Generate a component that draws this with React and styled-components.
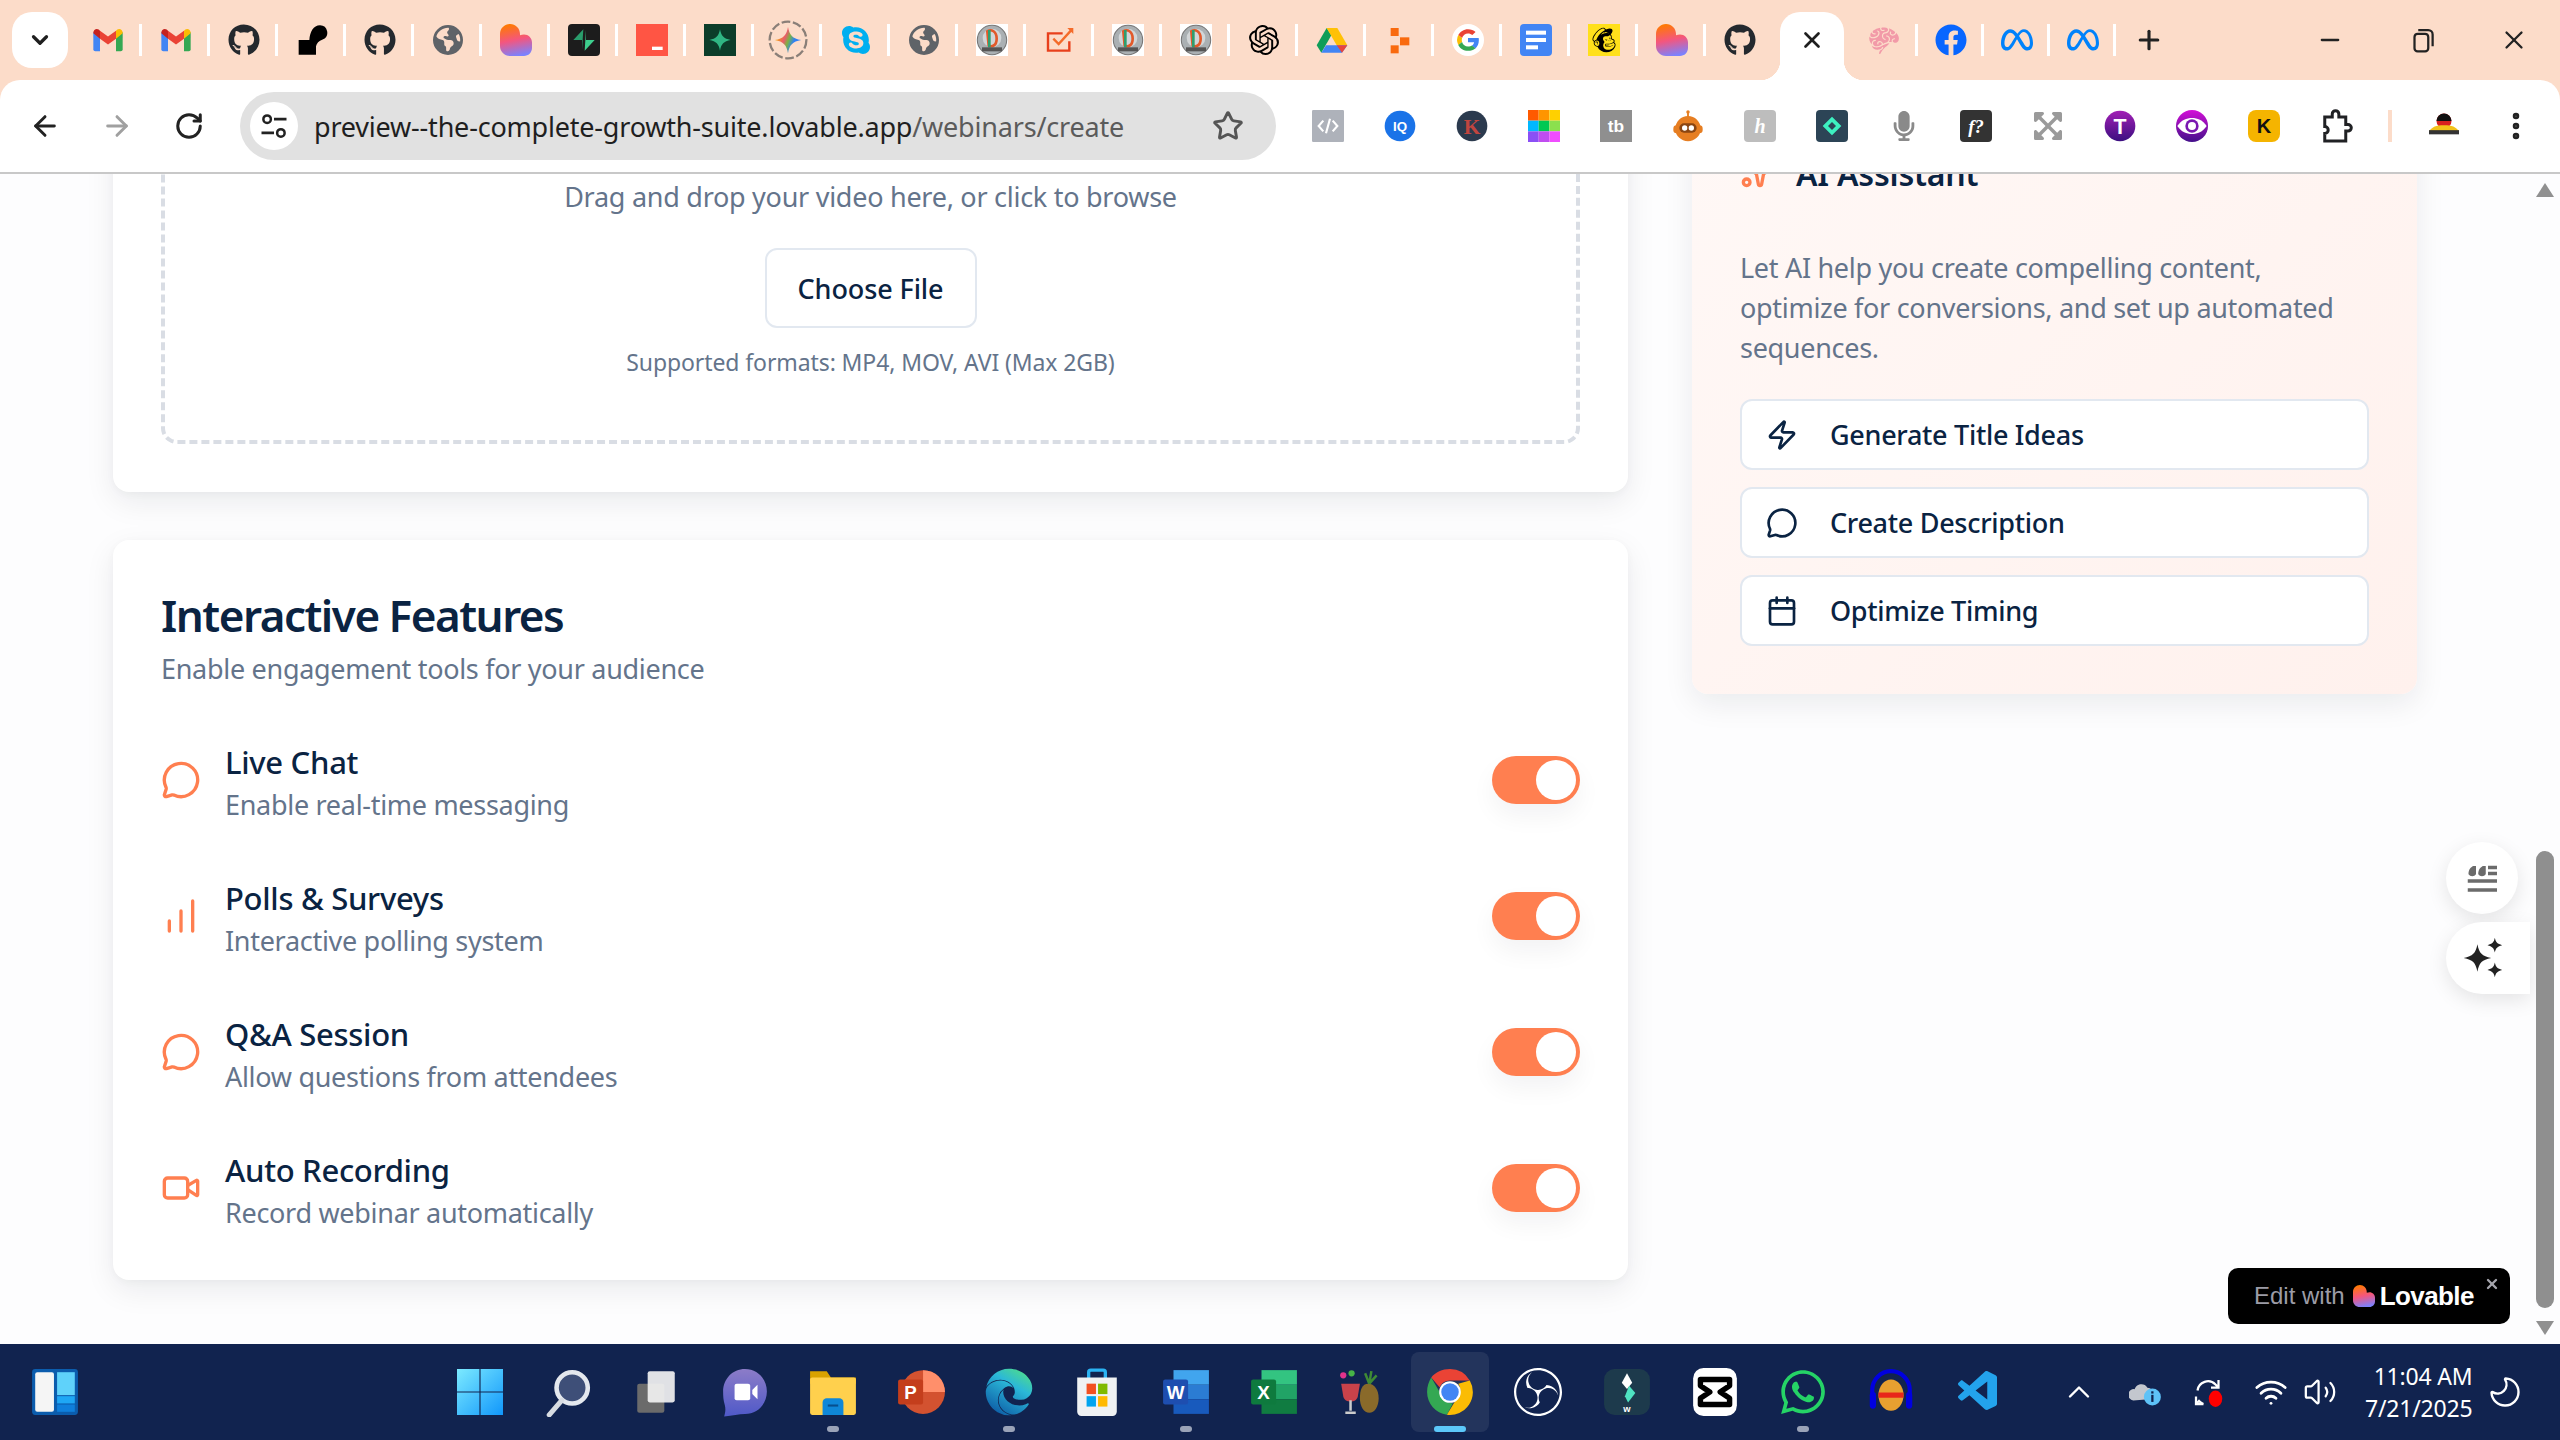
import React from "react"
import styled, { createGlobalStyle } from "styled-components"
import {
  ArrowLeft, ArrowRight, RotateCw, Star, X, Plus, Minus, ChevronDown, ChevronUp, MoreVertical,
  MessageCircle, ChartNoAxesColumnIncreasing, Video, Zap, Calendar, Sparkles, Wifi, Volume2, Moon,
} from "lucide-react"
import {
  FaGithub, FaSkype, FaFacebook, FaMailchimp, FaMicrophone, FaExpandArrowsAlt, FaWhatsapp, FaEdge,
} from "react-icons/fa"
import { FaEarthAmericas, FaMeta } from "react-icons/fa6"
import { SiOpenai, SiObsstudio } from "react-icons/si"
import { GiBrain } from "react-icons/gi"
import { VscVscode } from "react-icons/vsc"

const navy = "#0a2342"
const muted = "#64748b"
const coral = "#ff7f50"
const peach = "#fcdcc9"
const uiFont = `"Noto Sans", "Open Sans", sans-serif`

const GlobalStyle = createGlobalStyle`
  html, body { margin: 0; padding: 0; background: #fff; overflow: hidden; }
  * { box-sizing: border-box; }
`

const Glyph = ({ size = 32, children }) => (
  <svg width={size} height={size} viewBox="0 0 24 24" style={{ display: "block" }}>{children}</svg>
)

const LovableHeart = ({ size = 32 }) => (
  <Glyph size={size}>
    <defs>
      <linearGradient id="lovableGrad" x1="0.35" y1="0" x2="0.55" y2="1">
        <stop offset="0" stopColor="#ff7a00" />
        <stop offset="0.5" stopColor="#f4567e" />
        <stop offset="1" stopColor="#7a82ff" />
      </linearGradient>
    </defs>
    <path fill="url(#lovableGrad)" d="M7.500 0C11.700 0 15 3.300 15 7.500v1c1-.5 2-.7 3-.7 3.300 0 6 2.600 6 6V18c0 3.300-2.700 6-6 6H7.500C3.300 24 0 20.700 0 16.500v-9C0 3.300 3.300 0 7.500 0z" />
  </Glyph>
)

const Gmail = () => (
  <Glyph>
    <path fill="#4285f4" d="M1 6v13a1.500 1.500 0 0 0 1.500 1.500H6V10.500z" />
    <path fill="#34a853" d="M23 6v13a1.500 1.500 0 0 1-1.500 1.500H18V10.500z" />
    <path fill="#ea4335" d="M6 11l6 4.400 6-4.400V5l-6 4.400L6 5z" />
    <path fill="#c5221f" d="M1 6.500C1 4 3.600 3 5 4.200l1 .8v6L1 7z" />
    <path fill="#fbbc04" d="M23 6.500C23 4 20.400 3 19 4.200l-1 .8v6l5-4z" />
  </Glyph>
)
const GithubFav = () => <FaGithub size={32} color="#24292e" />
const BlobMark = () => <Glyph><path d="M2 12h8C10.500 6 13 1 18 1a5.500 5.500 0 0 1 2 10.600c-3 1-4.500 3-5 5V23H2z" /></Glyph>
const GlobeFav = () => <FaEarthAmericas size={30} color="#5f6368" />
const SupabaseFav = () => (
  <Glyph>
    <rect width="24" height="24" rx="3" fill="#1c1c1c" />
    <path fill="#3ecf8e" d="M13.500 4.500v7.500H20l-7.500 8z" />
    <path fill="#2a9d6c" d="M10.500 19.500V12H4l7.500-8z" />
  </Glyph>
)
const RedFav = () => (
  <Glyph><rect width="24" height="24" fill="#ff5544" /><rect x="12" y="17" width="8" height="2.500" fill="#fff" /></Glyph>
)
const GreenStarFav = () => (
  <Glyph>
    <rect width="24" height="24" fill="#0b3d2a" />
    <path fill="#2fb583" d="M12 4c.9 5 2.800 7 8 8-5.200 1-7.100 3-8 8-.9-5-2.800-7-8-8 5.200-1 7.100-3 8-8z" />
  </Glyph>
)
const GeminiFav = () => (
  <Glyph size={42}>
    <defs>
      <linearGradient id="geminiGrad" x1="0" y1="0.2" x2="1" y2="0.6">
        <stop offset="0.1" stopColor="#f9ab00" />
        <stop offset="0.4" stopColor="#ea5b6b" />
        <stop offset="0.55" stopColor="#7cb342" />
        <stop offset="0.75" stopColor="#2f80f5" />
      </linearGradient>
    </defs>
    <circle cx="12" cy="12" r="10.500" fill="none" stroke="#8a7f78" strokeWidth="1.300" strokeDasharray="5 1.500" />
    <path fill="url(#geminiGrad)" d="M12 4.500c.8 4.600 2.600 6.600 7.500 7.500-4.900.9-6.700 2.900-7.500 7.500-.8-4.600-2.600-6.600-7.500-7.500 4.900-.9 6.700-2.900 7.500-7.500z" />
  </Glyph>
)
const SkypeFav = () => <FaSkype size={32} color="#00aff0" />
const BadgeFav = () => (
  <Glyph>
    <rect width="24" height="24" fill="#fff" />
    <circle cx="12" cy="12" r="11" fill="#aab0b3" stroke="#777" strokeWidth="0.800" />
    <circle cx="12" cy="10.500" r="7" fill="#d2d6d8" />
    <path d="M8.500 5.500c3-2 7 0 7 5.500s-4 6.500-6 5z" fill="none" stroke="#e25a2b" strokeWidth="2" />
    <path d="M10 4.500v13" stroke="#2f9e6e" strokeWidth="2" />
    <rect x="4.500" y="17.500" width="15" height="3" fill="#555" />
  </Glyph>
)
const CheckFav = () => (
  <Glyph>
    <path d="M19 13v7H3V7h11" fill="none" stroke="#e8401c" strokeWidth="1.800" />
    <path d="M7 11l4 4 10-11" fill="none" stroke="#f46b2a" strokeWidth="1.800" />
    <path d="M17.500 3H22v4.500z" fill="#f46b2a" />
  </Glyph>
)
const OpenAiFav = () => <SiOpenai size={30} color="#000" />
const DriveFav = () => (
  <Glyph>
    <path fill="#0f9d58" d="M8 3l-7.500 13 3.500 5.500L11.500 8.500z" />
    <path fill="#ffc107" d="M8 3h8l7.500 13h-8z" />
    <path fill="#4285f4" d="M4 21.500h15.500l4-5.500H7.500z" />
    <path fill="#e8453c" d="M15.500 16h8l-4 5.500z" />
  </Glyph>
)
const OrangeBlocksFav = () => (
  <Glyph>
    <rect x="5" y="3" width="6" height="6" fill="#f96a0e" />
    <rect x="12" y="10" width="7" height="6" fill="#f96a0e" />
    <rect x="5" y="16" width="6" height="6" fill="#f96a0e" />
  </Glyph>
)
const GoogleFav = () => (
  <Glyph>
    <circle cx="12" cy="12" r="12" fill="#fff" />
    <g transform="translate(3.500 3.500) scale(0.708)">
      <path fill="#ea4335" d="M12 5c1.800 0 3.400.6 4.600 1.800l3.400-3.400C18 1.500 15.200.5 12 .5 7.500.5 3.600 3.100 1.700 6.800l4 3.100C6.600 7 9.100 5 12 5z" />
      <path fill="#4285f4" d="M23.500 12.300c0-.8-.1-1.600-.2-2.300H12v4.500h6.500c-.3 1.500-1.100 2.700-2.400 3.600l3.800 2.900c2.200-2.100 3.600-5.100 3.600-8.700z" />
      <path fill="#fbbc05" d="M5.700 14.100a7 7 0 0 1 0-4.200l-4-3.100a11.500 11.500 0 0 0 0 10.400z" />
      <path fill="#34a853" d="M12 23.500c3.100 0 5.700-1 7.900-2.800l-3.800-2.900c-1.100.7-2.400 1.200-4.100 1.200-2.900 0-5.400-2-6.300-4.900l-4 3.100c1.900 3.700 5.800 6.300 10.300 6.300z" />
    </g>
  </Glyph>
)
const DocsFav = () => (
  <Glyph>
    <rect width="24" height="24" rx="3" fill="#4285f4" />
    <rect x="4.500" y="5" width="15" height="3" fill="#fff" />
    <rect x="4.500" y="10.500" width="15" height="3" fill="#fff" />
    <rect x="4.500" y="16" width="9" height="3" fill="#fff" />
  </Glyph>
)
const MailchimpBox = styled.span`
  width: 32px;
  height: 32px;
  background: #ffe01b;
  display: flex;
  align-items: center;
  justify-content: center;
`
const MailchimpFav = () => (
  <MailchimpBox><FaMailchimp size={28} color="#000" /></MailchimpBox>
)
const BrainFav = () => <GiBrain size={32} color="#f29aa8" />
const FacebookFav = () => <FaFacebook size={32} color="#0866ff" />
const MetaFav = () => <FaMeta size={32} color="#0082fb" />

const TextBadge = ({ bg, color, label, round, fontSize = 13, family = "Liberation Sans", italic, radius = 3 }) => (
  <Glyph>
    {round
      ? <circle cx="12" cy="12" r="11.500" fill={bg} />
      : <rect width="24" height="24" rx={radius} fill={bg} />}
    <text x="12" y="12" dy="0.36em" textAnchor="middle" fill={color} fontSize={fontSize} fontWeight="700"
      fontFamily={family} fontStyle={italic ? "italic" : "normal"}>{label}</text>
  </Glyph>
)

const CodeExt = () => (
  <Glyph>
    <rect width="24" height="24" rx="1" fill="#aeb2ba" />
    <path d="M8.500 8L5 12l3.500 4M15.500 8l3.500 4-3.500 4M13.500 6.500l-3 11" fill="none" stroke="#fff" strokeWidth="1.600" />
  </Glyph>
)
const ColorGridExt = () => (
  <Glyph>
    {["#ff5a00", "#ff9500", "#ffd000", "#00b8ff", "#00c853", "#8be04e", "#8b50f5", "#c04df0", "#f04dff"].map((fill, i) => (
      <rect key={fill} x={(i % 3) * 8} y={Math.floor(i / 3) * 8} width="8" height="8" fill={fill} />
    ))}
  </Glyph>
)
const RobotExt = () => (
  <Glyph>
    <circle cx="12" cy="1.500" r="1.300" fill="#e67e22" />
    <rect x="11.300" y="1.500" width="1.400" height="4" fill="#e67e22" />
    <circle cx="12" cy="14" r="9.500" fill="#e67e22" />
    <rect x="1" y="11.500" width="22" height="6" rx="2.500" fill="#e67e22" />
    <rect x="5.500" y="10" width="13" height="7" rx="3.500" fill="#8a4511" />
    <circle cx="9.500" cy="13.500" r="2" fill="#fff" />
    <circle cx="14.500" cy="13.500" r="2" fill="#fff" />
  </Glyph>
)
const TealDiamondExt = () => (
  <Glyph>
    <rect width="24" height="24" rx="3" fill="#2c4456" />
    <path d="M12 5l7 7-7 7-7-7zM12 9l-3 3 3 3 3-3z" fill="#3df0c0" fillRule="evenodd" />
  </Glyph>
)
const EyeExt = () => (
  <Glyph>
    <defs>
      <linearGradient id="eyeGrad" x1="0" y1="0" x2="0" y2="1">
        <stop offset="0" stopColor="#d40fd8" />
        <stop offset="1" stopColor="#43108a" />
      </linearGradient>
    </defs>
    <circle cx="12" cy="12" r="12" fill="url(#eyeGrad)" />
    <path d="M1 12c3-4.500 7-6 11-6s8 1.500 11 6c-3 4.500-7 6-11 6s-8-1.500-11-6z" fill="#fff" />
    <circle cx="12" cy="12" r="5" fill="#7a17b0" />
    <circle cx="12" cy="12" r="3" fill="#fff" />
  </Glyph>
)
const TExt = () => (
  <Glyph>
    <defs>
      <linearGradient id="tGrad" x1="0" y1="0" x2="0" y2="1">
        <stop offset="0" stopColor="#a21fb5" />
        <stop offset="1" stopColor="#3b0f80" />
      </linearGradient>
    </defs>
    <circle cx="12" cy="12" r="11.500" fill="url(#tGrad)" />
    <text x="12" y="12" dy="0.36em" textAnchor="middle" fill="#fff" fontSize="16" fontWeight="700" fontFamily="Liberation Sans">T</text>
  </Glyph>
)
const PuzzleExt = () => (
  <Glyph size={36}>
    <path fill="none" stroke="#202124" strokeWidth="2" d="M4.500 6h5V4a2.200 2.200 0 0 1 4.400 0v2h4.600v5h1.500a2.200 2.200 0 0 1 0 4.400h-1.500V22H4.500v-5a2.300 2.300 0 0 0 0-4.600z" />
  </Glyph>
)
const AvatarExt = () => (
  <Glyph size={40}>
    <circle cx="12" cy="9" r="4.500" fill="#d81f1f" />
    <path d="M7.500 9a4.500 4.500 0 0 1 9 0z" fill="#111" />
    <path d="M3 15c2-2.500 4-3.500 9-3.500s7 1 9 3.500z" fill="#f2c21a" />
    <rect x="3" y="14.500" width="18" height="2.500" fill="#333" />
  </Glyph>
)

const tabs = [
  [Gmail], [Gmail], [GithubFav], [BlobMark], [GithubFav], [GlobeFav], [LovableHeart], [SupabaseFav], [RedFav],
  [GreenStarFav], [GeminiFav], [SkypeFav], [GlobeFav], [BadgeFav], [CheckFav], [BadgeFav], [BadgeFav], [OpenAiFav],
  [DriveFav], [OrangeBlocksFav], [GoogleFav], [DocsFav], [MailchimpFav], [LovableHeart], [GithubFav, true],
]

const extensions = [
  () => <CodeExt />,
  () => <TextBadge round bg="#1a73e8" color="#fff" label="IQ" fontSize={10} />,
  () => <TextBadge round bg="#2b3a4e" color="#c0453f" label="K" fontSize={16} family="Liberation Serif" />,
  () => <ColorGridExt />,
  () => <TextBadge bg="#8f8f8f" color="#fff" label="tb" fontSize={13} radius={0} />,
  () => <RobotExt />,
  () => <TextBadge bg="#bdbdbd" color="#fff" label="h" fontSize={15} family="Liberation Serif" italic />,
  () => <TealDiamondExt />,
  () => <FaMicrophone size={30} color="#8a8a8a" />,
  () => <TextBadge bg="#333" color="#fff" label="f?" fontSize={14} family="Liberation Serif" italic />,
  () => <FaExpandArrowsAlt size={32} color="#9a9a9a" />,
  () => <TExt />,
  () => <EyeExt />,
  () => <TextBadge bg="#f5b400" color="#111" label="K" fontSize={15} radius={6} />,
  () => <PuzzleExt />,
]

const features = [
  { icon: MessageCircle, title: "Live Chat", text: "Enable real-time messaging" },
  { icon: ChartNoAxesColumnIncreasing, title: "Polls & Surveys", text: "Interactive polling system" },
  { icon: MessageCircle, title: "Q&A Session", text: "Allow questions from attendees" },
  { icon: Video, title: "Auto Recording", text: "Record webinar automatically" },
]

const assistActions = [
  { icon: Zap, label: "Generate Title Ideas" },
  { icon: MessageCircle, label: "Create Description" },
  { icon: Calendar, label: "Optimize Timing" },
]

const WidgetsIcon = () => (
  <Glyph size={50}>
    <rect x="1" y="1" width="22" height="22" rx="1.500" fill="#0b5cad" />
    <rect x="2.500" y="2.500" width="9" height="19" rx="1" fill="#f5f5f5" />
    <rect x="13" y="2.500" width="8.500" height="11" fill="#5fd2fa" />
    <rect x="13" y="14" width="8.500" height="3.500" fill="#1ea7f5" />
    <rect x="13" y="18" width="8.500" height="3.500" fill="#0f7fdc" />
  </Glyph>
)
const StartIcon = () => (
  <Glyph size={46}>
    <defs>
      <linearGradient id="startGrad" x1="0" y1="0" x2="1" y2="1">
        <stop offset="0" stopColor="#7ceaff" />
        <stop offset="1" stopColor="#1197fb" />
      </linearGradient>
    </defs>
    <path fill="url(#startGrad)" d="M0 0h11.700v11.700H0zM12.300 0H24v11.700H12.300zM0 12.300h11.700V24H0zM12.300 12.300H24V24H12.300z" />
  </Glyph>
)
const SearchIcon = () => (
  <Glyph size={50}>
    <circle cx="14" cy="10" r="7.500" fill="#3e4f78" stroke="#e4e8ee" strokeWidth="2.200" />
    <path d="M9 16l-6 7" stroke="#d8dce2" strokeWidth="2.400" strokeLinecap="round" />
  </Glyph>
)
const TaskViewIcon = () => (
  <Glyph size={50}>
    <rect x="3" y="8" width="13" height="14" rx="1" fill="#6b6b6b" />
    <rect x="8" y="2" width="13" height="15" rx="1" fill="#f2f2f2" fillOpacity="0.92" />
  </Glyph>
)
const MeetIcon = () => (
  <Glyph size={50}>
    <defs>
      <linearGradient id="meetGrad" x1="0" y1="0" x2="0" y2="1">
        <stop offset="0" stopColor="#8c7cc8" />
        <stop offset="1" stopColor="#4f59c8" />
      </linearGradient>
    </defs>
    <path fill="url(#meetGrad)" d="M12 1c6 0 10.500 4.800 10.500 10.800S18 22.500 12 22.500c-3 0-6 .8-10 1.200 .6-2 .8-3.500 .3-5.500C1.600 16 1.500 14 1.500 11.800 1.500 5.800 6 1 12 1z" />
    <rect x="7" y="8" width="7.500" height="8" rx="1" fill="#fff" />
    <path d="M15.500 11l2.500-2.500v7L15.500 13z" fill="#fff" />
  </Glyph>
)
const FolderIcon = () => (
  <Glyph size={50}>
    <path d="M1 2h8l2 3h12v3H1z" fill="#d9a200" />
    <rect x="1" y="5" width="22" height="18" rx="1" fill="#ffd04d" />
    <path d="M7 23v-6a2 2 0 0 1 2-2h6a2 2 0 0 1 2 2v6z" fill="#0f87d8" />
    <rect x="9.500" y="18" width="5" height="1" fill="#074f8e" />
  </Glyph>
)
const PowerPointIcon = () => (
  <Glyph size={50}>
    <circle cx="13" cy="12" r="10.500" fill="#d35230" />
    <path d="M13 1.500A10.500 10.500 0 0 1 23.500 12H13z" fill="#ff8f6b" />
    <rect x="1" y="6" width="12" height="12" rx="1" fill="#c43e1c" />
    <text x="7" y="12" dy="0.36em" textAnchor="middle" fill="#fff" fontSize="9" fontWeight="700" fontFamily="Liberation Sans">P</text>
  </Glyph>
)
const EdgeIcon = () => (
  <EdgeWrap>
    <svg width="0" height="0" style={{ position: "absolute" }}>
      <defs>
        <linearGradient id="edgeGrad" x1="0.8" y1="0" x2="0.2" y2="1">
          <stop offset="0" stopColor="#4fdc8a" />
          <stop offset="0.35" stopColor="#2bb8d8" />
          <stop offset="1" stopColor="#0c59a4" />
        </linearGradient>
      </defs>
    </svg>
    <FaEdge size={48} />
  </EdgeWrap>
)
const EdgeWrap = styled.span`
  display: flex;
  svg { fill: url(#edgeGrad); }
`
const StoreIcon = () => (
  <Glyph size={50}>
    <path d="M8 6V2.500a1 1 0 0 1 1-1h6a1 1 0 0 1 1 1V6" fill="none" stroke="#2bb3f3" strokeWidth="1.600" />
    <path d="M2.500 5h19v16.500a2 2 0 0 1-2 2h-15a2 2 0 0 1-2-2z" fill="#eff1f3" />
    <rect x="7" y="8" width="4.500" height="5" fill="#f25022" />
    <rect x="12.500" y="8" width="4.500" height="5" fill="#7fba00" />
    <rect x="7" y="14" width="4.500" height="5" fill="#00a4ef" />
    <rect x="12.500" y="14" width="4.500" height="5" fill="#ffb900" />
  </Glyph>
)
const OfficeDocIcon = ({ top, mid, low, badge, label }) => (
  <Glyph size={50}>
    <rect x="6" y="1.500" width="17" height="7" fill={top} />
    <rect x="6" y="8.500" width="17" height="7" fill={mid} />
    <rect x="6" y="15.500" width="17" height="7" fill={low} />
    <rect x="1" y="6" width="12" height="12" rx="1" fill={badge} />
    <text x="7" y="12" dy="0.36em" textAnchor="middle" fill="#fff" fontSize="9" fontWeight="700" fontFamily="Liberation Sans">{label}</text>
  </Glyph>
)
const CocktailIcon = () => (
  <Glyph size={50}>
    <path d="M15 8c3 0 5 3 5 7s-2 7-4.500 7S11 19 11 15s1-7 4-7z" fill="#8a6a2a" />
    <path d="M15.500 8l-2-5M15.500 8l1-6M15.500 8l3.500-4" stroke="#3f8a35" strokeWidth="1.200" />
    <path d="M2 8h9l-1 6c-.4 2-2 2.500-3.500 2.500S3.400 16 3 14z" fill="#c9424a" />
    <path d="M6.500 16v5M4 22h5" stroke="#ccc" strokeWidth="1.200" />
    <circle cx="3" cy="4" r="1.500" fill="#e0338b" />
    <circle cx="7" cy="3" r="1.500" fill="#47b347" />
  </Glyph>
)
const ChromeIcon = () => (
  <Glyph size={50}>
    <path fill="#ea4335" d="M12 1a11 11 0 0 1 9.500 5.500H12a5.500 5.500 0 0 0-5 3.200L3 5C5 2.600 8.300 1 12 1z" />
    <path fill="#34a853" d="M3 5l4.700 8.200a5.500 5.500 0 0 0 5.700 4.200L10.500 22.900C5.200 22.200 1 17.600 1 12c0-2.600.8-5 2-7z" />
    <path fill="#fbbc04" d="M21.500 6.500A11 11 0 0 1 10.500 22.900l4.800-7.900A5.500 5.500 0 0 0 16 8z" />
    <circle cx="12" cy="12" r="5.200" fill="#fff" />
    <circle cx="12" cy="12" r="4.200" fill="#4285f4" />
  </Glyph>
)
const FilmoraIcon = () => (
  <Glyph size={50}>
    <rect x="1" y="1" width="22" height="22" rx="5" fill="#1d3a4c" />
    <path d="M12 3l2.500 4.500L12 10.500 9.500 7.500z" fill="#fff" />
    <path d="M13 9l3 3.500-3.500 4.500-1.500-3z" fill="#4fe3c1" />
    <text x="12" y="21.500" textAnchor="middle" fill="#fff" fontSize="4.500" fontWeight="700" fontFamily="Liberation Sans">w</text>
  </Glyph>
)
const CapcutIcon = () => (
  <Glyph size={50}>
    <rect x="1.500" y="0.500" width="21" height="23" rx="5" fill="#fff" />
    <path d="M5 6h14v3l-4.500 3 4.500 3v3H5v-3l4.500-3L5 9z" fill="none" stroke="#000" strokeWidth="2.600" strokeLinejoin="round" />
  </Glyph>
)
const AudacityIcon = () => (
  <Glyph size={50}>
    <path d="M3 15V11a9 9 0 0 1 18 0v4" fill="none" stroke="#0000e0" strokeWidth="2" />
    <rect x="1.800" y="12" width="3" height="8" rx="1.500" fill="#0000e0" />
    <rect x="19.200" y="12" width="3" height="8" rx="1.500" fill="#0000e0" />
    <ellipse cx="12" cy="13.500" rx="6" ry="7.500" fill="#e8a030" />
    <path d="M6 13.500h12" stroke="#e8261a" strokeWidth="2.500" />
  </Glyph>
)
const OneDriveIcon = () => (
  <Glyph size={34}>
    <path d="M3 18a4 4 0 0 1 1-8c1-4 7-5 9-1 4 0 5 5 3 8z" fill="#c3c7ce" />
    <circle cx="16.500" cy="15.500" r="6" fill="#5ec2f7" />
    <rect x="15.700" y="14" width="1.600" height="5" fill="#10234f" />
    <rect x="15.700" y="11.500" width="1.600" height="1.600" fill="#10234f" />
  </Glyph>
)
const SyncIcon = () => (
  <Glyph size={36}>
    <path d="M5 11a7 7 0 0 1 12-4l2 2M19 4v5h-5M4 20l2-2a7 7 0 0 0 3 2M4 15v5h5" fill="none" stroke="#fff" strokeWidth="1.500" />
    <ellipse cx="17" cy="16.500" rx="4.500" ry="5.500" fill="#f00" />
  </Glyph>
)

const QuoteLinesIcon = () => (
  <Glyph size={36}>
    <path d="M3 4h5v5.500a3 3 0 0 1-5 0c0-2 .5-4 3-5.500zM9.500 4h5v5.500a3 3 0 0 1-5 0c0-2 .5-4 3-5.500z" fill="#6b6b6b" />
    <path d="M16 5h6M16 9h6M2.500 14h19.500M2.500 20h19.500" stroke="#6b6b6b" strokeWidth="2.200" />
  </Glyph>
)
const StarsIcon = () => (
  <Glyph size={44}>
    <path fill="#222" d="M9.500 4.500c1 5 2.500 6.500 7.500 7.500-5 1-6.500 2.500-7.500 7.500-1-5-2.500-6.500-7.500-7.500 5-1 6.500-2.500 7.500-7.500zM19 1c.5 2.500 1.400 3.300 4 4-2.600.7-3.500 1.500-4 4-.5-2.500-1.400-3.300-4-4 2.600-.7 3.500-1.500 4-4zM19 14.500c.5 2.500 1.400 3.300 4 4-2.600.7-3.500 1.500-4 4-.5-2.500-1.400-3.300-4-4 2.600-.7 3.500-1.500 4-4z" />
  </Glyph>
)
const RestoreIcon = () => (
  <Glyph size={30}>
    <rect x="6" y="7" width="11" height="14" rx="2.500" fill="none" stroke="#222" strokeWidth="1.800" />
    <path d="M9 4h8a3.500 3.500 0 0 1 3.500 3.500V17" fill="none" stroke="#222" strokeWidth="1.800" />
  </Glyph>
)

const taskbarApps = [
  { node: <StartIcon /> },
  { node: <SearchIcon /> },
  { node: <TaskViewIcon /> },
  { node: <MeetIcon /> },
  { node: <FolderIcon />, dot: true },
  { node: <PowerPointIcon /> },
  { node: <EdgeIcon />, dot: true },
  { node: <StoreIcon /> },
  { node: <OfficeDocIcon top="#41a5ee" mid="#2b7cd3" low="#185abd" badge="#1e4eb0" label="W" />, dot: true },
  { node: <OfficeDocIcon top="#33c481" mid="#21a366" low="#107c41" badge="#0e7a3e" label="X" /> },
  { node: <CocktailIcon /> },
  { node: <ChromeIcon />, active: true },
  { node: <SiObsstudio size={48} color="#fff" /> },
  { node: <FilmoraIcon /> },
  { node: <CapcutIcon /> },
  { node: <FaWhatsapp size={50} color="#25d366" />, dot: true },
  { node: <AudacityIcon /> },
  { node: <VscVscode size={48} color="#23a3ec" /> },
]

const App = () => (
  <Screen>
    <GlobalStyle />
    <TabStrip>
      <TabSearch><ChevronDown size={26} strokeWidth={3} color="#1f1f1f" /></TabSearch>
      {tabs.map(([Icon, last], i) => (
        <Tab key={i} $noDivider={last}><Icon /></Tab>
      ))}
      <ActiveTab><X size={26} strokeWidth={2.500} color="#1f1f1f" /></ActiveTab>
      <Tab><BrainFav /></Tab>
      <NarrowTab><FacebookFav /></NarrowTab>
      <NarrowTab><MetaFav /></NarrowTab>
      <NarrowTab><MetaFav /></NarrowTab>
      <NarrowTab $noDivider><Plus size={30} strokeWidth={2.500} color="#222" /></NarrowTab>
      <WindowControls>
        <WindowButton><Minus size={28} strokeWidth={2} color="#222" /></WindowButton>
        <WindowButton><RestoreIcon /></WindowButton>
        <WindowButton><X size={30} strokeWidth={1.800} color="#222" /></WindowButton>
      </WindowControls>
    </TabStrip>

    <Toolbar>
      <NavButton><ArrowLeft size={32} strokeWidth={2.200} color="#222" /></NavButton>
      <NavButton><ArrowRight size={32} strokeWidth={2.200} color="#a0a0a0" /></NavButton>
      <NavButton><RotateCw size={30} strokeWidth={2.400} color="#222" /></NavButton>
      <Omnibox>
        <SiteInfo>
          <Glyph size={30}>
            <circle cx="6.500" cy="6.500" r="3" fill="none" stroke="#222" strokeWidth="2" />
            <path d="M12 6.500h10M2 17.500h10" stroke="#222" strokeWidth="2.200" />
            <circle cx="17.500" cy="17.500" r="3" fill="none" stroke="#222" strokeWidth="2" />
          </Glyph>
        </SiteInfo>
        <Url>preview--the-complete-growth-suite.lovable.app<UrlPath>/webinars/create</UrlPath></Url>
        <BookmarkStar><Star size={32} strokeWidth={2.200} color="#555" /></BookmarkStar>
      </Omnibox>
      <Extensions>
        {extensions.map((Ext, i) => (
          <NavButton key={i}><Ext /></NavButton>
        ))}
      </Extensions>
      <ToolbarDivider />
      <NavButton><AvatarExt /></NavButton>
      <NavButton><MoreVertical size={34} strokeWidth={2.600} color="#222" /></NavButton>
    </Toolbar>

    <Page>
      <Columns>
        <MainColumn>
          <Card>
            <DropZone>
              <DropText>Drag and drop your video here, or click to browse</DropText>
              <ChooseFile>Choose File</ChooseFile>
              <Formats>Supported formats: MP4, MOV, AVI (Max 2GB)</Formats>
            </DropZone>
          </Card>
          <Card>
            <CardTitle>Interactive Features</CardTitle>
            <CardSubtitle>Enable engagement tools for your audience</CardSubtitle>
            <FeatureList>
              {features.map(({ icon: Icon, title, text }) => (
                <FeatureRow key={title}>
                  <FeatureIcon><Icon size={40} strokeWidth={2} /></FeatureIcon>
                  <FeatureText>
                    <FeatureTitle>{title}</FeatureTitle>
                    <FeatureCaption>{text}</FeatureCaption>
                  </FeatureText>
                  <Toggle><Knob /></Toggle>
                </FeatureRow>
              ))}
            </FeatureList>
          </Card>
        </MainColumn>

        <AssistantCard>
          <AssistantHeader>
            <AssistantIcon><Sparkles size={40} strokeWidth={2} /></AssistantIcon>
            <AssistantTitle>AI Assistant</AssistantTitle>
          </AssistantHeader>
          <AssistantText>
            Let AI help you create compelling content, optimize for conversions, and set up automated sequences.
          </AssistantText>
          <AssistantActions>
            {assistActions.map(({ icon: Icon, label }) => (
              <ActionButton key={label}>
                <Icon size={32} strokeWidth={2} color={navy} />
                {label}
              </ActionButton>
            ))}
          </AssistantActions>
        </AssistantCard>
      </Columns>

      <FloatingDock>
        <DockCircle><QuoteLinesIcon /></DockCircle>
        <DockTab><StarsIcon /></DockTab>
      </FloatingDock>

      <ScrollArrow $up />
      <ScrollThumb />
      <ScrollArrow />

      <LovableBadge>
        <EditWith>Edit with</EditWith>
        <LovableHeart size={22} />
        <LovableName>Lovable</LovableName>
        <BadgeClose><X size={16} strokeWidth={3.500} color="#a5a5ad" /></BadgeClose>
      </LovableBadge>
    </Page>

    <Taskbar>
      <TaskbarWidgets><WidgetsIcon /></TaskbarWidgets>
      <TaskbarApps>
        {taskbarApps.map(({ node, dot, active }, i) => (
          <TaskbarApp key={i} $active={active}>
            {node}
            {dot && <RunningDot />}
            {active && <ActivePill />}
          </TaskbarApp>
        ))}
      </TaskbarApps>
      <Tray>
        <TrayIcon $w={56}><ChevronUp size={36} strokeWidth={1.600} color="#fff" /></TrayIcon>
        <TrayIcon $w={78}><OneDriveIcon /></TrayIcon>
        <TrayIcon $w={46}><SyncIcon /></TrayIcon>
        <TrayIcon $w={80}><Wifi size={34} strokeWidth={2} color="#fff" /></TrayIcon>
        <TrayIcon $w={18}><Volume2 size={34} strokeWidth={1.600} color="#fff" /></TrayIcon>
        <Clock>
          <span>11:04 AM</span>
          <span>7/21/2025</span>
        </Clock>
        <TrayIcon $w={66} $flip><Moon size={36} strokeWidth={1.600} color="#fff" /></TrayIcon>
      </Tray>
    </Taskbar>
  </Screen>
)

export default App

const Screen = styled.div`
  width: 2560px;
  height: 1440px;
  display: flex;
  flex-direction: column;
  background: ${peach};
  overflow: hidden;
  font-family: ${uiFont};
`

const TabStrip = styled.div`
  height: 80px;
  flex: none;
  padding-left: 12px;
  display: flex;
  align-items: center;
`

const TabSearch = styled.div`
  width: 56px;
  height: 56px;
  margin-right: 6px;
  border-radius: 20px;
  background: #fff;
  display: flex;
  align-items: center;
  justify-content: center;
`

const Tab = styled.div`
  width: 68px;
  height: 32px;
  flex: none;
  border-right: 3px solid ${props => (props.$noDivider ? "transparent" : "#fff")};
  padding-left: 3px;
  display: flex;
  align-items: center;
  justify-content: center;
`

const NarrowTab = styled(Tab)`
  width: 66px;
`

const ActiveTab = styled.div`
  position: relative;
  width: 64px;
  height: 68px;
  margin: 12px 6px 0;
  border-radius: 20px 20px 0 0;
  background: #fff;
  flex: none;
  padding-bottom: 12px;
  display: flex;
  align-items: center;
  justify-content: center;

  &::before,
  &::after {
    content: "";
    position: absolute;
    bottom: 0;
    width: 20px;
    height: 20px;
  }
  &::before {
    left: -20px;
    background: radial-gradient(circle at 0 0, transparent 20px, #fff 20.500px);
  }
  &::after {
    right: -20px;
    background: radial-gradient(circle at 100% 0, transparent 20px, #fff 20.500px);
  }
`

const WindowControls = styled.div`
  margin-left: auto;
  display: flex;
`

const WindowButton = styled.div`
  width: 92px;
  height: 40px;
  display: flex;
  align-items: center;
  justify-content: center;
`

const Toolbar = styled.div`
  position: relative;
  height: 94px;
  flex: none;
  padding-left: 9px;
  background: #fff;
  border-radius: 20px 20px 0 0;
  border-bottom: 2px solid #c8c8c8;
  display: flex;
  align-items: center;
`

const NavButton = styled.div`
  width: 72px;
  height: 68px;
  flex: none;
  display: flex;
  align-items: center;
  justify-content: center;
`

const Omnibox = styled.div`
  width: 1036px;
  height: 68px;
  margin-left: 15px;
  padding: 0 8px 0 10px;
  border-radius: 34px;
  background: #e1e1e1;
  display: flex;
  align-items: center;
`

const SiteInfo = styled.div`
  width: 48px;
  height: 48px;
  border-radius: 50%;
  background: #fff;
  display: flex;
  align-items: center;
  justify-content: center;
`

const Url = styled.div`
  margin-left: 16px;
  font-size: 27px;
  letter-spacing: -0.2px;
  color: #1f1f1f;
  white-space: nowrap;
`

const UrlPath = styled.span`
  color: #5b5b5b;
`

const BookmarkStar = styled.div`
  margin-left: auto;
  margin-right: 24px;
  display: flex;
`

const Extensions = styled.div`
  margin-left: 16px;
  display: flex;
`

const ToolbarDivider = styled.div`
  width: 4px;
  height: 32px;
  margin: 0 16px;
  background: ${peach};
`

const Page = styled.main`
  position: relative;
  flex: 1;
  min-height: 0;
  background: #fdfdfe;
  overflow: hidden;
`

const Columns = styled.div`
  margin-top: -70px;
  padding-left: 113px;
  display: grid;
  grid-template-columns: 1515px 725px;
  column-gap: 64px;
  align-items: start;
`

const MainColumn = styled.div`
  display: flex;
  flex-direction: column;
  gap: 48px;
`

const Card = styled.section`
  padding: 48px;
  border-radius: 16px;
  background: #fff;
  box-shadow: 0 10px 30px rgba(15, 23, 42, 0.08), 0 2px 8px rgba(15, 23, 42, 0.03);
`

const DropZone = styled.div`
  height: 292px;
  padding-top: 21px;
  border: 4px dashed #d9dde4;
  border-radius: 16px;
  display: flex;
  flex-direction: column;
  align-items: center;
`

const DropText = styled.p`
  margin: 0;
  font-size: 27px;
  letter-spacing: -0.27px;
  line-height: 40px;
  color: ${muted};
`

const ChooseFile = styled.button`
  width: 212px;
  height: 80px;
  margin-top: 31px;
  border: 2px solid #e2e8f0;
  border-radius: 12px;
  background: #fff;
  color: ${navy};
  font-family: ${uiFont};
  font-size: 27px;
  letter-spacing: -0.1px;
  font-weight: 500;
`

const Formats = styled.p`
  margin: 16px 0 0;
  font-size: 23px;
  letter-spacing: -0.1px;
  line-height: 36px;
  color: ${muted};
`

const CardTitle = styled.h2`
  margin: 0;
  font-size: 44px;
  letter-spacing: -1.500px;
  line-height: 54px;
  font-weight: 600;
  color: ${navy};
`

const CardSubtitle = styled.p`
  margin: 7px 0 0;
  font-size: 27px;
  letter-spacing: -0.3px;
  line-height: 40px;
  color: ${muted};
`

const FeatureList = styled.div`
  margin-top: 47px;
  display: flex;
  flex-direction: column;
  gap: 48px;
`

const FeatureRow = styled.div`
  height: 88px;
  display: flex;
  align-items: center;
`

const FeatureIcon = styled.div`
  width: 40px;
  margin-right: 24px;
  color: ${coral};
  display: flex;
`

const FeatureText = styled.div`
  flex: 1;
`

const FeatureTitle = styled.div`
  font-size: 31px;
  letter-spacing: -0.3px;
  line-height: 50px;
  font-weight: 500;
  color: ${navy};
`

const FeatureCaption = styled.div`
  margin-top: -1px;
  font-size: 27px;
  letter-spacing: -0.3px;
  line-height: 38px;
  color: ${muted};
`

const Toggle = styled.div`
  width: 88px;
  height: 48px;
  padding: 4px;
  border-radius: 24px;
  background: ${coral};
  box-shadow: 0 12px 24px rgba(15, 23, 42, 0.05);
  display: flex;
  justify-content: flex-end;
`

const Knob = styled.div`
  width: 40px;
  height: 40px;
  border-radius: 50%;
  background: #fff;
`

const AssistantCard = styled.aside`
  padding: 48px;
  border-radius: 16px;
  background: linear-gradient(135deg, #fff8f6, #fff1ed);
  box-shadow: 0 10px 30px rgba(15, 23, 42, 0.08);
`

const AssistantHeader = styled.div`
  height: 44px;
  display: flex;
  align-items: flex-start;
  gap: 16px;
`

const AssistantIcon = styled.div`
  margin-top: -3px;
  color: ${coral};
  display: flex;
`

const AssistantTitle = styled.h3`
  margin: 0;
  font-size: 32px;
  letter-spacing: -0.2px;
  line-height: 44px;
  font-weight: 600;
  color: ${navy};
`

const AssistantText = styled.p`
  margin: 52px 0 0;
  font-size: 27px;
  letter-spacing: -0.3px;
  line-height: 40px;
  color: ${muted};
`

const AssistantActions = styled.div`
  margin-top: 31px;
  display: flex;
  flex-direction: column;
  gap: 17px;
`

const ActionButton = styled.button`
  width: 100%;
  height: 71px;
  padding: 0 24px;
  border: 2px solid #e2e8f0;
  border-radius: 12px;
  background: #fff;
  color: ${navy};
  font-family: ${uiFont};
  font-size: 27px;
  letter-spacing: -0.3px;
  font-weight: 500;
  display: flex;
  align-items: center;
  gap: 32px;
`

const FloatingDock = styled.div`
  position: absolute;
  top: 668px;
  left: 2446px;
  width: 84px;
  display: flex;
  flex-direction: column;
  gap: 8px;
`

const DockCircle = styled.div`
  width: 72px;
  height: 72px;
  border-radius: 50%;
  background: #fff;
  box-shadow: 0 6px 20px rgba(0, 0, 0, 0.1);
  display: flex;
  align-items: center;
  justify-content: center;
`

const DockTab = styled.div`
  width: 84px;
  height: 72px;
  padding-left: 14px;
  border-radius: 36px 0 0 36px;
  background: #fff;
  box-shadow: 0 6px 20px rgba(0, 0, 0, 0.1);
  display: flex;
  align-items: center;
`

const ScrollThumb = styled.div`
  position: absolute;
  top: 677px;
  left: 2536px;
  width: 18px;
  height: 457px;
  border-radius: 9px;
  background: #8f8f8f;
`

const ScrollArrow = styled.div`
  position: absolute;
  left: 2536px;
  top: ${props => (props.$up ? "9px" : "1147px")};
  width: 18px;
  height: 14px;
  background: #909090;
  clip-path: ${props => (props.$up ? "polygon(50% 0, 100% 100%, 0 100%)" : "polygon(0 0, 100% 0, 50% 100%)")};
`

const LovableBadge = styled.div`
  position: absolute;
  top: 1094px;
  left: 2228px;
  width: 282px;
  height: 56px;
  padding-left: 26px;
  border-radius: 10px;
  background: #000;
  display: flex;
  align-items: center;
  font-family: "Liberation Sans", Arial, sans-serif;
`

const EditWith = styled.span`
  margin-right: 8px;
  font-size: 24px;
  color: #9c9ca6;
`

const LovableName = styled.span`
  margin-left: 5px;
  font-size: 26px;
  font-weight: 700;
  letter-spacing: -0.6px;
  color: #fff;
`

const BadgeClose = styled.div`
  position: absolute;
  top: 8px;
  right: 10px;
  display: flex;
`

const Taskbar = styled.footer`
  height: 96px;
  flex: none;
  background: #11234f;
  display: flex;
  align-items: center;
`

const TaskbarWidgets = styled.div`
  width: 436px;
  padding-left: 30px;
  flex: none;
`

const TaskbarApps = styled.div`
  display: flex;
`

const TaskbarApp = styled.div`
  position: relative;
  width: 88.200px;
  height: 80px;
  flex: none;
  display: flex;
  align-items: center;
  justify-content: center;

  &::before {
    content: "";
    position: absolute;
    inset: 0 5px;
    border-radius: 8px;
    background: ${props => (props.$active ? "rgba(255, 255, 255, 0.08)" : "transparent")};
  }
  & > * {
    position: relative;
  }
`

const RunningDot = styled.span`
  && {
    position: absolute;
  }
  bottom: 0;
  left: 38px;
  width: 12px;
  height: 6px;
  border-radius: 3px;
  background: #9aa3b8;
`

const ActivePill = styled.span`
  && {
    position: absolute;
  }
  bottom: 0;
  left: 28px;
  width: 32px;
  height: 6px;
  border-radius: 3px;
  background: #5cc8fa;
`

const Tray = styled.div`
  margin-left: 28px;
  display: flex;
  align-items: center;
`

const TrayIcon = styled.div`
  width: ${props => props.$w}px;
  display: flex;
  justify-content: center;
  transform: ${props => (props.$flip ? "scaleX(-1)" : "none")};

  svg {
    flex: none;
  }
`

const Clock = styled.div`
  width: 143px;
  display: flex;
  flex-direction: column;
  align-items: flex-end;
  color: #fff;
  font-size: 23px;
  letter-spacing: -0.2px;
  line-height: 32px;
  font-family: "Noto Sans", sans-serif;
`
